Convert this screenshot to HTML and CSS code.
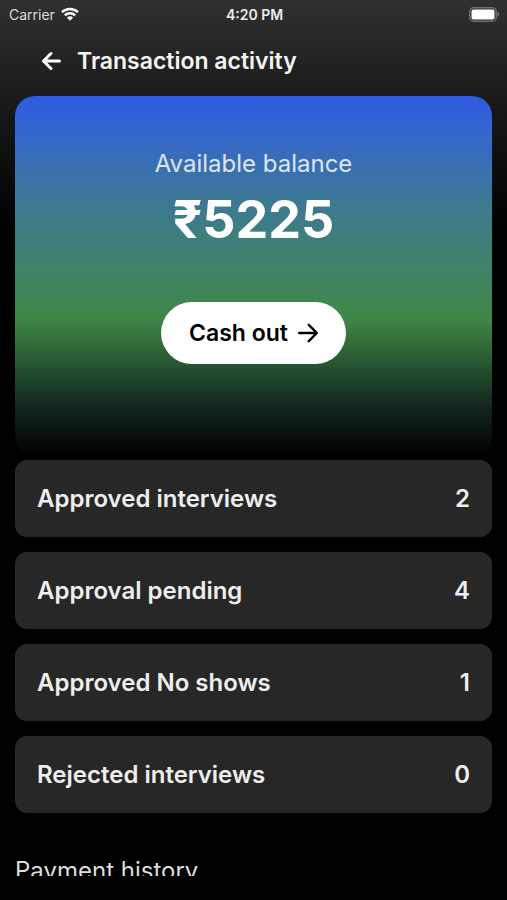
FILE: index.html
```html
<!DOCTYPE html>
<html lang="en">
<head>
<meta charset="utf-8">
<meta name="viewport" content="width=device-width, initial-scale=1">
<title>Transaction activity</title>
<link rel="stylesheet" href="styles.css">
</head>
<body>
<div class="screen">
  <div class="status">
    <span class="carrier">Carrier
      <svg class="wifi" viewBox="0 0 18 14" aria-hidden="true">
        <path d="M1 5.2a11.5 11.5 0 0 1 16 0M3.8 8.4a7.4 7.4 0 0 1 10.4 0" fill="none" stroke="currentColor" stroke-width="2.5"/>
        <path d="M9 13.8 6 10.8a4.3 4.3 0 0 1 6 0z" fill="currentColor"/>
      </svg>
    </span>
    <span class="time">4:20 PM</span>
    <svg class="battery" viewBox="0 0 31 15" aria-hidden="true">
      <rect x="0.75" y="0.75" width="26.5" height="13.5" rx="4" fill="none" stroke="#707070" stroke-width="1.5"/>
      <rect x="2.5" y="2.5" width="23" height="10" rx="2" fill="#fff"/>
      <path d="M28.5 5v5q2-.8 2-2.5T28.5 5z" fill="#707070"/>
    </svg>
  </div>
  <header class="header">
    <button class="back" type="button" aria-label="Back">
      <svg class="arrow" viewBox="0 0 20 20" aria-hidden="true">
        <path d="M18.5 10H2.5M10 2.5 2.5 10l7.5 7.5" fill="none" stroke="currentColor" stroke-width="3" stroke-linecap="round" stroke-linejoin="round"/>
      </svg>
    </button>
    <h1 class="title">Transaction activity</h1>
  </header>
  <main class="content">
    <section class="balance">
      <p class="label">Available balance</p>
      <p class="amount">₹5225</p>
      <button class="cash-out" type="button">Cash out
        <svg class="arrow" viewBox="0 0 20 20" aria-hidden="true">
          <path d="M1.2 10h17.6M10.8 1.8 18.8 10l-8 8.2" fill="none" stroke="currentColor" stroke-width="2.4" stroke-linecap="round" stroke-linejoin="round"/>
        </svg>
      </button>
    </section>
    <dl class="stats">
      <div class="stat"><dt>Approved interviews</dt><dd>2</dd></div>
      <div class="stat"><dt>Approval pending</dt><dd>4</dd></div>
      <div class="stat"><dt>Approved No shows</dt><dd>1</dd></div>
      <div class="stat"><dt>Rejected interviews</dt><dd>0</dd></div>
    </dl>
    <h2 class="history">Payment history</h2>
  </main>
</div>
</body>
</html>
```
FILE: styles.css
```css
* { box-sizing: border-box; }

body, h1, h2, p, dl, dd { margin: 0; }

body {
  background: #000;
  color: #fff;
  font-family: Inter, "Liberation Sans", sans-serif;
}

button {
  border: 0;
  padding: 0;
  font: inherit;
}

.screen {
  display: flex;
  flex-direction: column;
  height: 100vh;
  padding-bottom: 24px;
  background: linear-gradient(#303030 0, #1b1b1b 96px, #000 230px);
}

.status {
  display: grid;
  grid-template-columns: 1fr auto 1fr;
  align-items: center;
  height: 28px;
  padding: 0 7px 0 9px;
  font-size: 14px;
}

.carrier {
  display: flex;
  align-items: center;
  gap: 6px;
  color: #ddd;
}

.wifi { width: 18px; height: 14px; color: #fff; }

.time { font-weight: 600; color: #eee; }

.battery { justify-self: end; width: 31px; height: 15px; }

.header {
  display: flex;
  align-items: center;
  gap: 16px;
  height: 68px;
  padding: 0 41px 3px;
}

.back {
  display: flex;
  background: none;
  color: #fff;
}

.arrow { width: 20px; height: 20px; }

.title {
  color: #f4f4f4;
  font-size: 23px;
  font-weight: 600;
  line-height: 28px;
}

.content {
  flex: 1;
  min-height: 0;
  overflow: hidden;
  padding: 0 15px;
}

.balance {
  display: flex;
  flex-direction: column;
  align-items: center;
  padding: 52px 16px 92px;
  border-radius: 20px;
  background: linear-gradient(#2f5be0 0, #3668c8 12%, #3d7992 30%, #3f8468 48%, #3f8645 62%, #24502f 76%, #11241d 87%, #000 100%);
}

.label {
  color: #dde6f4;
  font-size: 24px;
  line-height: 32px;
}

.amount {
  padding-top: 8px;
  margin-bottom: 50px;
  font-size: 52px;
  font-weight: 700;
  line-height: 64px;
}

.cash-out {
  display: flex;
  align-items: center;
  gap: 10px;
  height: 62px;
  padding: 0 28px;
  border-radius: 31px;
  background: #fff;
  color: #000;
  font-size: 23px;
  font-weight: 600;
}

.stats {
  display: grid;
  gap: 15px;
  margin-top: 4px;
}

.stat {
  display: flex;
  justify-content: space-between;
  align-items: center;
  height: 77px;
  padding: 0 22px;
  border-radius: 12px;
  background: #272727;
  color: #eee;
  font-size: 24px;
  font-weight: 600;
}

.history {
  margin-top: 42px;
  color: #ddd;
  font-size: 24px;
  font-weight: 400;
  line-height: 32px;
}
```
